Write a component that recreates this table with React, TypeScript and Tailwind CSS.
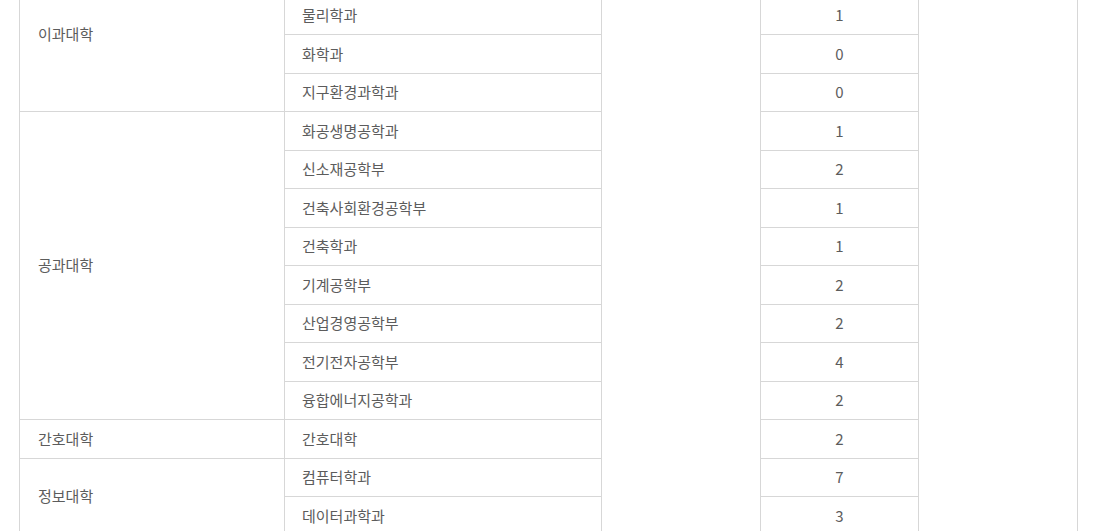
type Group = { college: string; rows: [string, number | null][] };

// first row sits above the visible area; it only keeps the rowspan heights right
const groups: Group[] = [
  { college: "이과대학", rows: [["", null], ["물리학과", 1], ["화학과", 0], ["지구환경과학과", 0]] },
  {
    college: "공과대학",
    rows: [
      ["화공생명공학과", 1],
      ["신소재공학부", 2],
      ["건축사회환경공학부", 1],
      ["건축학과", 1],
      ["기계공학부", 2],
      ["산업경영공학부", 2],
      ["전기전자공학부", 4],
      ["융합에너지공학과", 2],
    ],
  },
  { college: "간호대학", rows: [["간호대학", 2]] },
  { college: "정보대학", rows: [["컴퓨터학과", 7], ["데이터과학과", 3]] },
];

const total = groups.reduce((n, g) => n + g.rows.length, 0);
const cell = "border border-[#d7d7d7] h-[38.5px] p-0";

export default function App() {
  return (
    <div
      className="h-[531px] w-[1095px] overflow-hidden bg-white text-[15px] text-[#5c5c5c]"
      style={{ fontFamily: '"Noto Sans CJK KR", "Noto Sans", sans-serif' }}
    >
      <table className="ml-[19px] mt-[-43px] w-[1059px] table-fixed border-collapse">
        <colgroup>
          <col className="w-[265px]" />
          <col className="w-[317px]" />
          <col className="w-[159px]" />
          <col className="w-[158px]" />
          <col className="w-[159px]" />
        </colgroup>
        <tbody>
          {groups.map((g, gi) =>
            g.rows.map(([dept, n], ri) => (
              <tr key={`${gi}-${ri}`}>
                {ri === 0 && (
                  <td rowSpan={g.rows.length} className={`${cell} pl-[18px] text-left`}>
                    {g.college}
                  </td>
                )}
                <td className={`${cell} pl-[17px] text-left`}>{dept}</td>
                {gi === 0 && ri === 0 && <td rowSpan={total} className={cell} />}
                <td className={`${cell} text-center`}>{n}</td>
                {gi === 0 && ri === 0 && <td rowSpan={total} className={cell} />}
              </tr>
            ))
          )}
        </tbody>
      </table>
    </div>
  );
}
